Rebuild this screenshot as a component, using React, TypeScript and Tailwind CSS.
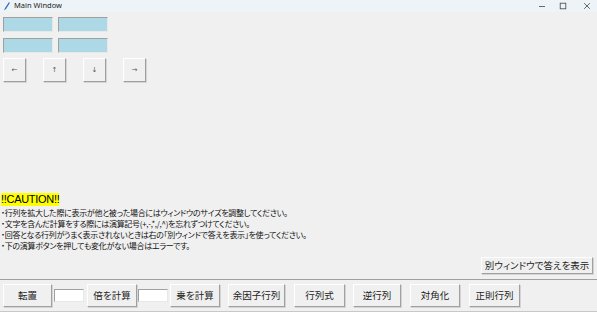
import React from "react";

const raised =
  "border border-t-white border-l-white border-r-[#a0a0a0] border-b-[#a0a0a0] shadow-[1px_1px_0_#d4d4d4] bg-[#f0f0f0]";
const sunken =
  "border border-t-[#a0a0a0] border-l-[#a0a0a0] border-r-[#e8e8e8] border-b-[#e8e8e8]";

const jp = "font-['Noto_Sans_CJK_JP','Noto_Sans',sans-serif] [font-feature-settings:'palt']";

const bottomItems: { kind: "btn" | "entry"; label?: string; w: number; ml: string }[] = [
  { kind: "btn", label: "転置", w: 49, ml: "ml-[3px]" },
  { kind: "entry", w: 30, ml: "ml-[2px]" },
  { kind: "btn", label: "倍を計算", w: 50, ml: "ml-[3px]" },
  { kind: "entry", w: 30, ml: "ml-[1px]" },
  { kind: "btn", label: "乗を計算", w: 50, ml: "ml-[2px]" },
  { kind: "btn", label: "余因子行列", w: 57, ml: "ml-[8px]" },
  { kind: "btn", label: "行列式", w: 51, ml: "ml-[9px]" },
  { kind: "btn", label: "逆行列", w: 48, ml: "ml-[8px]" },
  { kind: "btn", label: "対角化", w: 50, ml: "ml-[9px]" },
  { kind: "btn", label: "正則行列", w: 51, ml: "ml-[9px]" },
];

const notes = [
  "・行列を拡大した際に表示が他と被った場合にはウィンドウのサイズを調整してください。",
  "・文字を含んだ計算をする際には演算記号(+,-,*,/,^)を忘れずつけてください。",
  "・回答となる行列がうまく表示されないときは右の「別ウィンドで答えを表示」を使ってください。",
  "・下の演算ボタンを押しても変化がない場合はエラーです。",
];

export default function App() {
  return (
    <div className="w-[597px] h-[312px] bg-[#f0f0f0] flex flex-col overflow-hidden text-black">
      {/* title bar */}
      <div className="h-[12px] bg-[#eef3f8] flex items-center relative">
        <svg width="7" height="9" viewBox="0 0 7 9" className="ml-[3px]">
          <path d="M6 0 L2 6 L1 8.5 L3 7 L6.8 1 Z" fill="#2f6fc0" />
        </svg>
        <span className="ml-[4px] text-[7.5px] leading-none font-['Noto_Sans',sans-serif] text-[#222]">
          Main Window
        </span>
        <div className="ml-auto flex items-center h-full text-[#333]">
          <svg width="8" height="8" viewBox="0 0 8 8" className="mr-[13px]">
            <path d="M1 4.5 H7" stroke="#444" strokeWidth="0.8" />
          </svg>
          <svg width="8" height="8" viewBox="0 0 8 8" className="mr-[16px]">
            <rect x="1.2" y="1.2" width="5.6" height="5.6" fill="none" stroke="#444" strokeWidth="0.8" />
          </svg>
          <svg width="8" height="8" viewBox="0 0 8 8" className="mr-[6px]">
            <path d="M1.2 1.2 L6.8 6.8 M6.8 1.2 L1.2 6.8" stroke="#444" strokeWidth="0.8" />
          </svg>
        </div>
      </div>

      {/* matrix entries */}
      <div className="ml-[3px] mt-[5px] grid grid-cols-[50px_50px] gap-x-[5px] gap-y-[6px] w-max">
        {[0, 1, 2, 3].map((i) => (
          <div key={i} className={`h-[15px] bg-[#add8e6] ${sunken}`} />
        ))}
      </div>

      {/* arrows */}
      <div className="ml-[3px] mt-[5px] flex gap-[17px]">
        {["←", "↑", "↓", "→"].map((a) => (
          <button
            key={a}
            className={`w-[23px] h-[24px] ${raised} flex items-center justify-center text-[7px] text-[#555] font-['DejaVu_Sans',sans-serif] leading-none`}
          >
            {a}
          </button>
        ))}
      </div>

      <div className="flex-1" />

      {/* caution */}
      <div className={`${jp} px-[1px]`}>
        <span className="inline-block bg-[#ffff00] text-[11px] leading-[13px] font-['Liberation_Sans',sans-serif] tracking-[-0.3px]">
          !!CAUTION!!
        </span>
        <div className="-mt-[1px] text-[8px] leading-[11px] tracking-[-0.3px] text-[#111]">
          {notes.map((n) => (
            <div key={n} className="whitespace-nowrap">
              {n}
            </div>
          ))}
        </div>
      </div>

      <div className="flex justify-end mt-[6px] mr-[4px]">
        <button
          className={`${raised} ${jp} w-[112px] h-[17px] text-[9.5px] leading-none text-[#222]`}
        >
          別ウィンドウで答えを表示
        </button>
      </div>

      {/* bottom bar */}
      <div className="mt-[5px] border-t border-t-[#a0a0a0] h-[33px] flex items-center border-b border-b-[#c8c8c8]">
        {bottomItems.map((it, i) =>
          it.kind === "btn" ? (
            <button
              key={i}
              style={{ width: it.w }}
              className={`${it.ml} h-[23px] ${raised} ${jp} text-[9.5px] leading-none text-[#222]`}
            >
              {it.label}
            </button>
          ) : (
            <div key={i} style={{ width: it.w }} className={`${it.ml} h-[13px] bg-white ${sunken}`} />
          )
        )}
      </div>
    </div>
  );
}
